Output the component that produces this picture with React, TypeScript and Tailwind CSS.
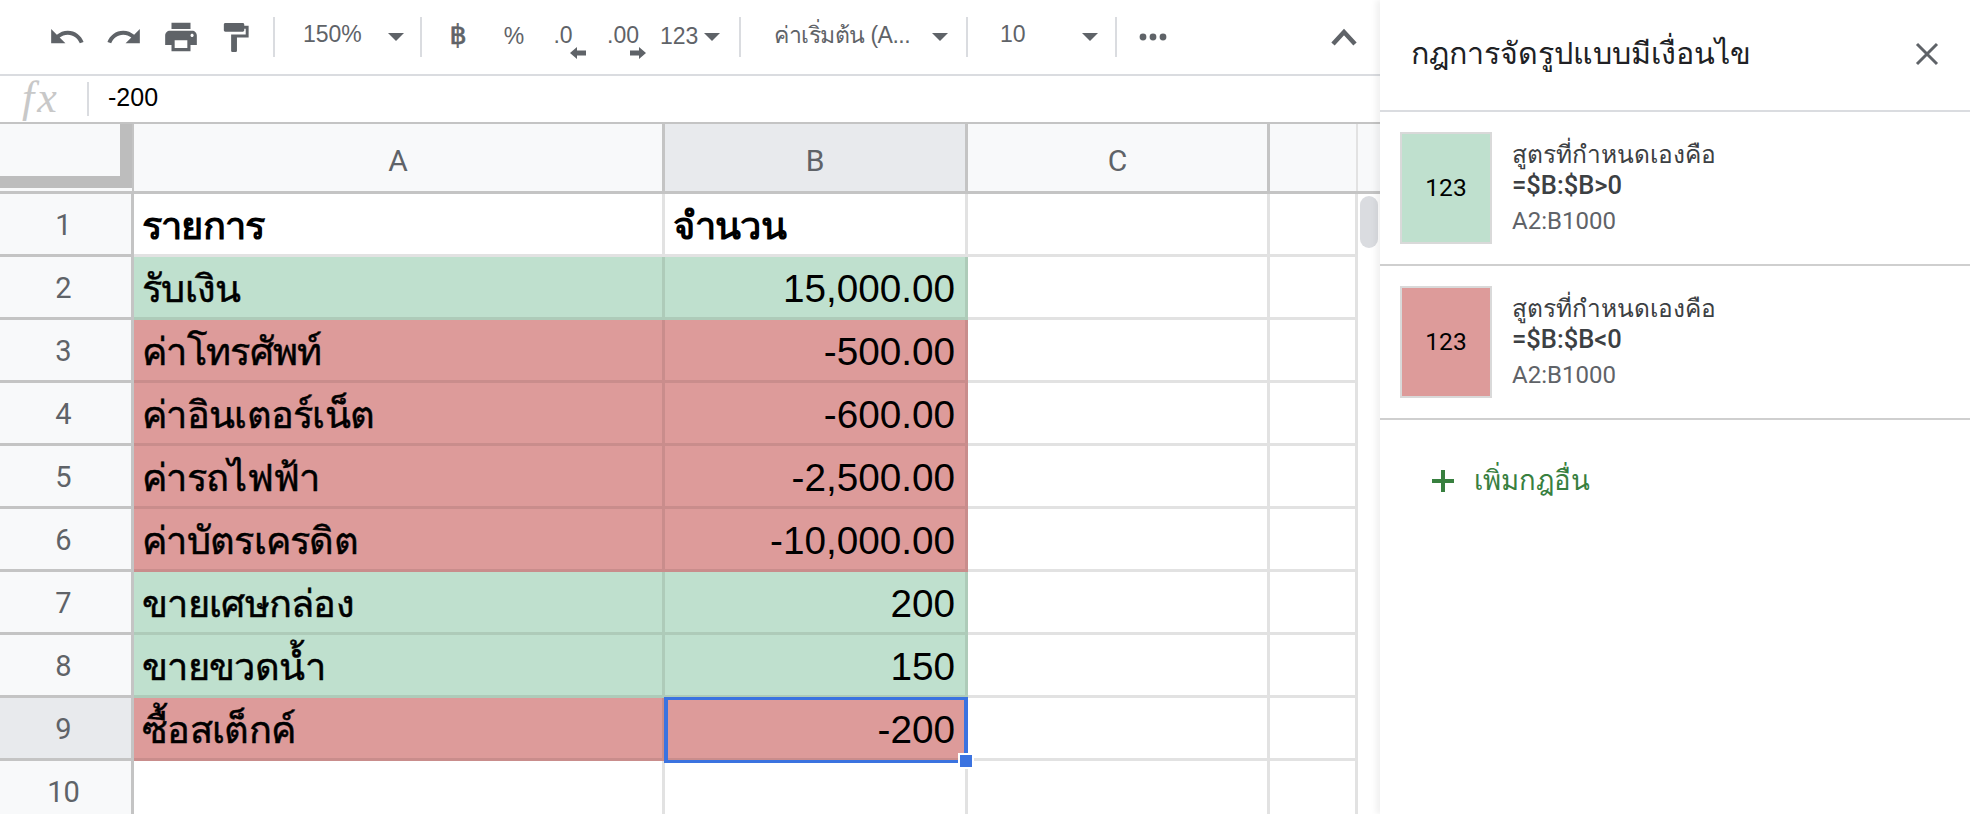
import React from 'react';

const ICON = '#5f6368';

const rows: { n: number; a: string; b: string; tone: 'plain' | 'green' | 'red' | 'empty'; bold?: boolean }[] = [
  { n: 1, a: 'รายการ', b: 'จำนวน', tone: 'plain', bold: true },
  { n: 2, a: 'รับเงิน', b: '15,000.00', tone: 'green' },
  { n: 3, a: 'ค่าโทรศัพท์', b: '-500.00', tone: 'red' },
  { n: 4, a: 'ค่าอินเตอร์เน็ต', b: '-600.00', tone: 'red' },
  { n: 5, a: 'ค่ารถไฟฟ้า', b: '-2,500.00', tone: 'red' },
  { n: 6, a: 'ค่าบัตรเครดิต', b: '-10,000.00', tone: 'red' },
  { n: 7, a: 'ขายเศษกล่อง', b: '200', tone: 'green' },
  { n: 8, a: 'ขายขวดน้ำ', b: '150', tone: 'green' },
  { n: 9, a: 'ซื้อสเต็กค์', b: '-200', tone: 'red' },
  { n: 10, a: '', b: '', tone: 'empty' },
];

const toneClass = {
  plain: 'bg-white border-[#e2e2e2]',
  empty: 'bg-white border-[#e2e2e2]',
  green: 'bg-[#bfe0ce] border-[#aecbb9]',
  red: 'bg-[#dd9b9a] border-[#c98d8c]',
};

const Glyph = ({ d, size = 38 }: { d: string; size?: number }) => (
  <svg width={size} height={size} viewBox="0 0 24 24" fill={ICON}>
    <path d={d} />
  </svg>
);

const Caret = () => (
  <svg width="16" height="8" viewBox="0 0 16 8" fill={ICON} className="shrink-0">
    <path d="M0 0h16L8 8z" />
  </svg>
);

const Divider = () => <div className="w-[2px] h-[40px] bg-[#dadce0] shrink-0" />;

const Slot = ({ w, children }: { w: string; children: React.ReactNode }) => (
  <div className={`${w} h-full flex items-center justify-center shrink-0`}>{children}</div>
);

const NudgeArrow = ({ flip, className }: { flip?: boolean; className: string }) => (
  <svg width="16" height="12" viewBox="0 0 16 12" fill={ICON} className={className}>
    <path d={flip ? 'M0 3.5h9V0l7 6-7 6V8.5H0z' : 'M16 3.5H7V0L0 6l7 6V8.5h9z'} />
  </svg>
);

const Toolbar = () => (
  <div className="h-[76px] shrink-0 border-b-2 border-[#dadce0] flex items-center pl-[38px] text-[23px] font-medium text-[#5f6368]">
    <Slot w="w-[57px]">
      <Glyph d="M12.5 8c-2.65 0-5.05.99-6.9 2.6L2 7v9h9l-3.62-3.62c1.39-1.16 3.16-1.88 5.12-1.88 3.54 0 6.55 2.31 7.6 5.5l2.37-.78C21.08 11.03 17.15 8 12.5 8z" />
    </Slot>
    <Slot w="w-[57px]">
      <Glyph d="M18.4 10.6C16.55 8.99 14.15 8 11.5 8c-4.65 0-8.58 3.03-9.96 7.22L3.9 16c1.05-3.19 4.05-5.5 7.6-5.5 1.95 0 3.73.72 5.12 1.88L13 16h9V7l-3.6 3.6z" />
    </Slot>
    <Slot w="w-[57px]">
      <Glyph d="M19 8H5c-1.66 0-3 1.34-3 3v6h4v4h12v-4h4v-6c0-1.66-1.34-3-3-3zm-3 11H8v-5h8v5zm3-7c-.55 0-1-.45-1-1s.45-1 1-1 1 .45 1 1-.45 1-1 1zm-1-9H6v4h12V3z" />
    </Slot>
    <Slot w="w-[53px]">
      <Glyph size={35} d="M18 4V3c0-.55-.45-1-1-1H5c-.55 0-1 .45-1 1v4c0 .55.45 1 1 1h12c.55 0 1-.45 1-1V6h1v4H9v11c0 .55.45 1 1 1h2c.55 0 1-.45 1-1v-9h8V4h-3z" />
    </Slot>
    <div className="w-[11px] shrink-0" />
    <Divider />
    <div className="w-[145px] h-full flex items-center justify-between pl-[28px] pr-[16px] shrink-0">
      <span className="-mt-[6px]">150%</span>
      <Caret />
    </div>
    <Divider />
    <div className="w-[8px] shrink-0" />
    <Slot w="w-[56px]">
      <span className="font-['DejaVu_Sans',sans-serif] font-normal text-[27px] -mt-[4px] [-webkit-text-stroke:0.6px_#5f6368]">฿</span>
    </Slot>
    <Slot w="w-[56px]"><span className="-mt-[2px]">%</span></Slot>
    <Slot w="w-[42px]">
      <span className="relative -mt-[4px]">
        .0
        <NudgeArrow className="absolute left-[17px] top-[29px]" />
      </span>
    </Slot>
    <Slot w="w-[76px]">
      <span className="relative -mt-[4px] ml-[2px]">
        .00
        <NudgeArrow flip className="absolute left-[23px] top-[29px]" />
      </span>
    </Slot>
    <span className="w-[44px] shrink-0 -mt-[2px]">123</span>
    <Caret />
    <div className="w-[19px] shrink-0" />
    <Divider />
    <div className="w-[225px] h-full flex items-center justify-between pl-[33px] pr-[18px] shrink-0">
      <span className="-mt-[4px] tracking-[-0.5px]">ค่าเริ่มต้น (A...</span>
      <Caret />
    </div>
    <Divider />
    <div className="w-[147px] h-full flex items-center justify-between pl-[32px] pr-[17px] shrink-0">
      <span className="-mt-[6px]">10</span>
      <Caret />
    </div>
    <Divider />
    <Slot w="w-[72px]">
      <svg width="28" height="8" viewBox="0 0 28 8" fill={ICON}>
        <circle cx="4" cy="4" r="3.4" />
        <circle cx="14" cy="4" r="3.4" />
        <circle cx="24" cy="4" r="3.4" />
      </svg>
    </Slot>
    <div className="flex-1" />
    <div className="pr-[22px] flex items-center">
      <svg width="28" height="18" viewBox="0 0 28 18" fill="none" stroke={ICON} strokeWidth="4.5">
        <path d="M3 16L14 4l11 12" />
      </svg>
    </div>
  </div>
);

const FormulaBar = () => (
  <div className="h-[48px] shrink-0 border-b-2 border-[#c4c4c4] flex items-center">
    <span className="w-[87px] pl-[22px] text-[44px] leading-none tracking-[3px] italic text-[#c8c8c8] font-['Liberation_Serif',serif] -mt-[2px]">
      fx
    </span>
    <div className="w-[2px] h-[34px] bg-[#dadce0]" />
    <span className="pl-[19px] text-[25px] text-black -mt-[2px]">-200</span>
  </div>
);

const ColHead = ({ w, label, active }: { w: string; label?: string; active?: boolean }) => (
  <div
    className={`${w} h-full shrink-0 flex items-center justify-center pt-[5px] border-r-[3px] border-[#c4c4c4] text-[30px] text-[#5f6368] font-['Roboto',sans-serif] ${
      active ? 'bg-[#e8eaed]' : 'bg-[#f8f9fa]'
    }`}
  >
    {label}
  </div>
);

const HeaderRow = () => (
  <div className="h-[70px] shrink-0 flex border-b-[3px] border-[#c4c4c4]">
    <div className="w-[134px] h-full shrink-0 bg-[#f8f9fa] border-r-[2px] border-[#c4c4c4]">
      <div className="h-[64px] border-r-[12px] border-b-[12px] border-[#bdbdbd]" />
    </div>
    <ColHead w="w-[531px]" label="A" />
    <ColHead w="w-[303px]" label="B" active />
    <ColHead w="w-[302px]" label="C" />
    <div className="w-[88px] h-full shrink-0 bg-[#f8f9fa] border-r-2 border-[#e2e2e2]" />
    <div className="flex-1 bg-[#f8f9fa]" />
  </div>
);

const SheetRow = ({ row }: { row: (typeof rows)[number] }) => {
  const selected = row.n === 9;
  const tone = toneClass[row.tone];
  const thai = row.bold
    ? 'font-bold tracking-[-0.8px]'
    : 'tracking-[-0.7px] [-webkit-text-stroke:0.5px_black]';
  return (
    <div className="h-[63px] shrink-0 flex text-[38px] text-black">
      <div
        className={`w-[134px] h-full shrink-0 flex items-center justify-center pr-[4px] pt-[4px] border-r-[3px] border-b-[3px] border-[#c4c4c4] text-[29px] text-[#5f6368] font-['Roboto',sans-serif] ${
          selected ? 'bg-[#e8eaed]' : 'bg-[#f8f9fa]'
        }`}
      >
        {row.n}
      </div>
      <div
        className={`w-[531px] h-full shrink-0 flex items-center pl-[8px] pt-[4px] border-r-[3px] border-b-[3px] whitespace-nowrap ${tone} ${thai}`}
      >
        {row.a}
      </div>
      <div
        className={`relative w-[303px] h-full shrink-0 flex items-center pt-[5px] border-r-[3px] border-b-[3px] whitespace-nowrap ${tone} ${
          selected ? 'z-10' : ''
        } ${row.bold ? `justify-start pl-[8px] ${thai}` : 'justify-end pr-[10px] text-[38.7px]'}`}
      >
        {row.b}
        {selected && (
          <>
            <div className="absolute -left-[1px] -top-[1px] -right-[3px] -bottom-[5px] border-x-4 border-y-[3px] border-[#3b73e0]" />
            <div className="absolute -right-[9px] -bottom-[11px] w-[16px] h-[16px] bg-[#3b73e0] border-2 border-white" />
          </>
        )}
      </div>
      <div className="w-[302px] h-full shrink-0 bg-white border-r-[3px] border-b-[3px] border-[#e2e2e2]" />
      <div className="w-[88px] h-full shrink-0 bg-white border-r-[3px] border-b-[3px] border-[#e2e2e2]" />
      <div className="flex-1 bg-white" />
    </div>
  );
};

const Sheet = () => (
  <div className="relative flex-1 flex flex-col min-h-0 overflow-hidden">
    <HeaderRow />
    {rows.map(r => (
      <SheetRow key={r.n} row={r} />
    ))}
    <div className="absolute left-[1360px] top-[72px] w-[18px] h-[52px] rounded-[9px] bg-[#dadce0]" />
  </div>
);

const Rule = ({ color, sign }: { color: string; sign: string }) => (
  <div className="h-[154px] shrink-0 border-b-2 border-[#cfcfcf] flex items-start pl-[20px] pt-[20px]">
    <div className={`w-[92px] h-[112px] shrink-0 border-2 border-[#d9d9d9] flex items-center justify-center text-[24.5px] text-black ${color}`}>
      123
    </div>
    <div className="pl-[20px] pt-[8px] flex flex-col">
      <span className="text-[24.5px] leading-[30px] text-[#3c4043]">สูตรที่กำหนดเองคือ</span>
      <span className="text-[25.5px] leading-[30px] font-medium text-[#3c4043]">=$B:$B{sign}0</span>
      <span className="text-[24px] leading-[30px] mt-[6px] text-[#5f6368]">A2:B1000</span>
    </div>
  </div>
);

const SidePanel = () => (
  <div className="w-[590px] h-full shrink-0 bg-white flex flex-col shadow-[-4px_0_6px_rgba(0,0,0,0.06)] relative">
    <div className="h-[112px] shrink-0 border-b-2 border-[#dadce0] flex items-center justify-between pl-[31px] pr-[30px]">
      <span className="text-[30.4px] text-[#202124] -mt-[3px]">กฎการจัดรูปแบบมีเงื่อนไข</span>
      <svg width="26" height="26" viewBox="0 0 26 26" stroke={ICON} strokeWidth="3" className="-mt-[2px]">
        <path d="M3 3l20 20M23 3L3 23" />
      </svg>
    </div>
    <Rule color="bg-[#bfe0ce]" sign=">" />
    <Rule color="bg-[#dd9b9a]" sign="<" />
    <div className="flex items-center pl-[52px] pt-[40px] text-[#38803f]">
      <svg width="22" height="22" viewBox="0 0 22 22" fill="#38803f">
        <path d="M9 0h4v9h9v4h-9v9H9v-9H0V9h9z" />
      </svg>
      <span className="pl-[20px] text-[27.5px] font-medium">เพิ่มกฎอื่น</span>
    </div>
  </div>
);

export default function App() {
  return (
    <div className="w-[1970px] h-[814px] flex overflow-hidden bg-white font-['Roboto','Liberation_Sans','Noto_Sans',sans-serif]">
      <div className="w-[1380px] h-full shrink-0 flex flex-col font-['Liberation_Sans','Noto_Sans',sans-serif]">
        <Toolbar />
        <FormulaBar />
        <Sheet />
      </div>
      <SidePanel />
    </div>
  );
}
